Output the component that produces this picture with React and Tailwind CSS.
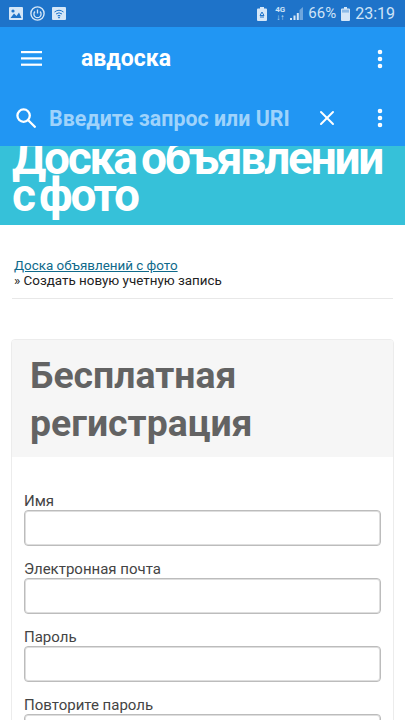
import { MoreVertical, X } from 'lucide-react';

const fields = ['Имя', 'Электронная почта', 'Пароль', 'Повторите пароль'];

const StatusBar = () => (
  <div className="h-[27px] bg-[#1e73c9] flex items-center justify-between pl-[9px] pr-[10px] text-[#cfe3f7]">
    <div className="flex items-center gap-[7px]">
      <svg width="14" height="13" viewBox="0 0 14 13">
        <rect width="14" height="13" rx="1" fill="#d5e7f8" />
        <circle cx="4" cy="4" r="1.6" fill="#1e73c9" />
        <path d="M1.5 11 L5 6.5 L7.5 9 L10 5.5 L12.5 11 Z" fill="#1e73c9" />
      </svg>
      <svg width="15" height="15" viewBox="0 0 15 15" fill="none" stroke="#d5e7f8">
        <circle cx="7.5" cy="7.5" r="6.6" strokeWidth="1.4" />
        <path d="M5 5.5 A3.6 3.6 0 1 0 10 5.5 M7.5 3.5 V7.5" strokeWidth="1.3" />
      </svg>
      <svg width="14" height="13" viewBox="0 0 14 13" fill="none">
        <rect width="14" height="13" rx="1" fill="#d5e7f8" />
        <path d="M2.5 5 Q7 1.5 11.5 5 M4 7 Q7 4.6 10 7 M5.6 8.8 Q7 7.8 8.4 8.8" stroke="#1e73c9" strokeWidth="1" />
        <circle cx="7" cy="10.4" r="0.9" fill="#1e73c9" />
      </svg>
    </div>
    <div className="flex items-center font-['Roboto',sans-serif] text-[15px] leading-none">
      <svg width="10" height="14" viewBox="0 0 10 14" className="mr-[8px]">
        <path d="M3 0 H7 V1.5 H9 Q10 1.5 10 2.5 V13 Q10 14 9 14 H1 Q0 14 0 13 V2.5 Q0 1.5 1 1.5 H3 Z" fill="#d5e7f8" />
        <path d="M5 5 L7 8.5 H3 Z M3 10 H7" stroke="#1e73c9" strokeWidth="1" fill="none" />
      </svg>
      <div className="flex flex-col items-center text-[8px] font-bold leading-[8px] mr-[5px]">
        <span>4G</span>
        <span>↓↑</span>
      </div>
      <svg width="13" height="13" viewBox="0 0 13 13" className="mr-[5px]">
        <path d="M13 0 V13 H9.5 V3 Z" fill="#6fa6dc" />
        <rect x="0" y="11" width="2" height="2" fill="#d5e7f8" />
        <rect x="3.5" y="8.5" width="2" height="4.5" fill="#d5e7f8" />
        <rect x="6.8" y="6" width="2" height="7" fill="#d5e7f8" />
      </svg>
      <span className="mr-[5px]">66%</span>
      <svg width="9" height="14" viewBox="0 0 9 14" className="mr-[5px]">
        <path d="M3 0 H6 V1.5 H8 Q9 1.5 9 2.5 V13 Q9 14 8 14 H1 Q0 14 0 13 V2.5 Q0 1.5 1 1.5 H3 Z" fill="#d5e7f8" />
        <rect x="1" y="2.6" width="7" height="3" fill="#8dbbe8" />
      </svg>
      <span className="text-[16px]">23:19</span>
    </div>
  </div>
);

const Toolbar = () => (
  <div className="bg-[#2196f3] text-white font-['Roboto',sans-serif]">
    <div className="h-[63px] flex items-center pl-[21px] pr-[16px]">
      <svg width="21" height="15" viewBox="0 0 21 15" fill="white">
        <rect y="0" width="21" height="2.2" />
        <rect y="6.3" width="21" height="2.2" />
        <rect y="12.6" width="21" height="2.2" />
      </svg>
      <span className="ml-[39px] text-[23px] font-bold leading-none">авдоска</span>
      <MoreVertical size={24} strokeWidth={2.6} className="ml-auto -mr-[3px]" />
    </div>
    <div className="h-[56px] flex items-center pl-[16px] pr-[16px]">
      <svg width="20" height="20" viewBox="0 0 20 20" fill="none" stroke="white" strokeWidth="2.3">
        <circle cx="7.6" cy="7.6" r="6.2" />
        <path d="M12 12 L18.8 18.8" strokeLinecap="round" />
      </svg>
      <span className="ml-[13px] mt-[1px] text-[21.4px] font-bold text-[#9fd3fb] leading-none whitespace-nowrap">Введите запрос или URI</span>
      <X size={24} strokeWidth={2} className="ml-auto" />
      <MoreVertical size={24} strokeWidth={2.6} className="ml-[29px] -mr-[3px]" />
    </div>
  </div>
);

export default function App() {
  return (
    <div className="w-[405px] h-[720px] overflow-hidden bg-white font-['Roboto',sans-serif]">
      <StatusBar />
      <Toolbar />
      <div className="h-[79px] bg-[#36c1d9] overflow-hidden px-[12px]">
        <h1 className="-mt-[6px] text-[46px] leading-[37px] font-bold text-white tracking-[-2.2px] [word-spacing:-4px]">
          Доска объявлений<br />с фото
        </h1>
      </div>
      <div className="mx-[12px] mt-[33px] pb-[10px] border-b border-[#e8e8e8] text-[13.4px] leading-[15px] text-[#222]">
        <a className="text-[#0f6a8b] underline block ml-[2px]">Доска объявлений с фото</a>
        <div className="ml-[2px]">» Создать новую учетную запись</div>
      </div>
      <div className="mx-[11px] mt-[40px] border border-[#ececec] rounded-[4px] overflow-hidden">
        <div className="bg-[#f6f6f6] h-[117px] pl-[18px] pt-[11px]">
          <h2 className="text-[37.4px] leading-[48px] font-bold text-[#636363]">Бесплатная регистрация</h2>
        </div>
        <div className="px-[12px] pt-[34px]">
          {fields.map((label) => (
            <div key={label} className="mb-[13px]">
              <label className="block text-[15px] leading-[20px] text-[#444] -mb-[1px]">{label}</label>
              <input className="block w-full h-[36px] bg-white border border-[#bcbcbc] shadow-[inset_0_0_0_1px_#dedede] rounded-[4px]" />
            </div>
          ))}
        </div>
      </div>
    </div>
  );
}
